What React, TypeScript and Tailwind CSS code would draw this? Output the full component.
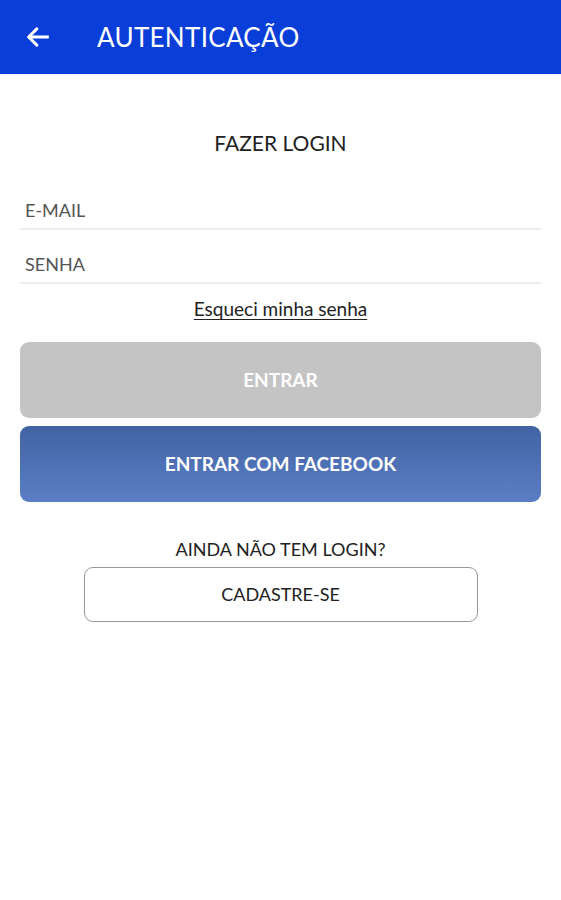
import React from "react";

export default function App() {
  return (
    <div className="w-[561px] h-[900px] bg-white flex flex-col" style={{ fontFamily: "Lato, 'Open Sans', sans-serif" }}>
      <div className="h-[74px] bg-[#0a3ed8] flex items-center shrink-0">
        <div className="w-[97px] flex items-center pl-[24px]">
          <svg width="28" height="28" viewBox="0 0 24 24" fill="none" stroke="white" strokeWidth="2.6" strokeLinecap="square">
            <path d="M20 12H5" />
            <path d="M11 5l-7 7 7 7" strokeLinecap="round" strokeLinejoin="round" />
          </svg>
        </div>
        <div className="text-white text-[26px] tracking-[0.3px]">AUTENTICAÇÃO</div>
      </div>
      <div className="px-[20px] flex flex-col">
        <div className="text-center text-[21px] text-[#222] mt-[55px] leading-[28px]">FAZER LOGIN</div>
        <div className="mt-[41px] border-b-2 border-[#ececec] pl-[5px] pb-[6px] text-[18px] text-[#555] leading-[24px]">E-MAIL</div>
        <div className="mt-[22px] border-b-2 border-[#ececec] pl-[5px] pb-[6px] text-[18px] text-[#555] leading-[24px]">SENHA</div>
        <div className="text-center mt-[13px] leading-[24px]">
          <span className="text-[19px] text-[#222] underline underline-offset-[3px]">Esqueci minha senha</span>
        </div>
        <div className="mt-[20px] h-[76px] rounded-[9px] bg-[#c4c4c4] flex items-center justify-center text-white font-bold text-[19px]">ENTRAR</div>
        <div className="mt-[8px] h-[76px] rounded-[9px] bg-gradient-to-b from-[#4263a3] to-[#5b7ec6] flex items-center justify-center text-white font-bold text-[19px]">ENTRAR COM FACEBOOK</div>
        <div className="text-center mt-[35px] text-[18px] text-[#222] leading-[24px]">AINDA NÃO TEM LOGIN?</div>
        <div className="mx-auto mt-[6px] w-[394px] h-[55px] border border-[#999] rounded-[9px] flex items-center justify-center text-[18px] text-[#222]">CADASTRE-SE</div>
      </div>
    </div>
  );
}
